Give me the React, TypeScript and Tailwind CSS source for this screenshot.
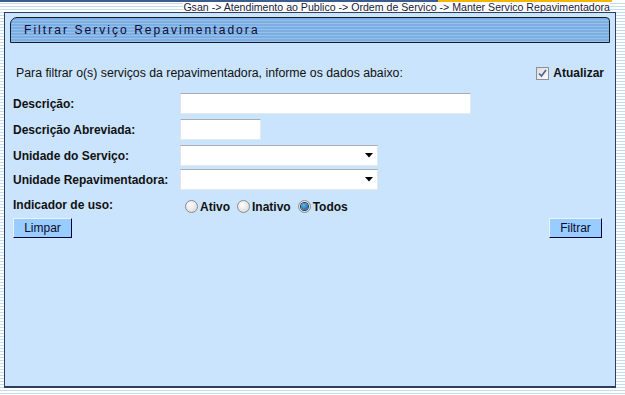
import React from "react";

const FONT = "font-['Liberation_Sans',Arial,sans-serif]";

function Checkbox() {
  return (
    <span className="flex h-[13px] w-[13px] items-center justify-center border border-[#8e8f8f] bg-[linear-gradient(135deg,#dcdcdc,#fbfbfb)]">
      <svg width="9" height="9" viewBox="0 0 9 9">
        <path d="M1 4.5 L3.5 7 L8 1" fill="none" stroke="#4a5f97" strokeWidth="1.6" />
      </svg>
    </span>
  );
}

function Radio({ checked }: { checked?: boolean }) {
  return (
    <span className="flex h-[13px] w-[13px] items-center justify-center rounded-full border border-[#8b8b8b] bg-[radial-gradient(circle_at_40%_35%,#ffffff,#d2d2d2)]">
      {checked && (
        <span className="h-[7px] w-[7px] rounded-full bg-[radial-gradient(circle_at_40%_35%,#5fb7ea,#0b4f86)] ring-1 ring-[#153a5c]" />
      )}
    </span>
  );
}

function TextBox({ w }: { w: string }) {
  return (
    <div
      className={`h-[21px] ${w} border border-t-[#abadb3] border-l-[#e2e3ea] border-r-[#e3e9ef] border-b-[#e3e9ef] bg-white`}
    />
  );
}

function Select() {
  return (
    <div className="flex h-[21px] w-[198px] items-center justify-end border border-t-[#abadb3] border-l-[#e2e3ea] border-r-[#e3e9ef] border-b-[#e3e9ef] bg-white pr-[4px]">
      <svg width="8" height="5" viewBox="0 0 8 5">
        <path d="M0 0 H8 L4 4.5 Z" fill="#000" />
      </svg>
    </div>
  );
}

function Button({ label, w }: { label: string; w: string }) {
  return (
    <button
      className={`h-[20px] ${w} border border-t-[#e8f3ff] border-l-[#e8f3ff] border-r-[#00003a] border-b-[#00003a] bg-[#99ccff] text-[12px] leading-none text-[#0b0b2e]`}
    >
      {label}
    </button>
  );
}

function Row({ label, children, className = "" }: { label: string; children: React.ReactNode; className?: string }) {
  return (
    <div className={`flex items-center ${className}`}>
      <span className="w-[167px] text-[12px] font-bold text-[#111]">{label}</span>
      {children}
    </div>
  );
}

export default function App() {
  return (
    <div
      className={`${FONT} min-h-[395px] w-[625px] bg-[repeating-linear-gradient(180deg,#c4dcef_0px,#c4dcef_1px,#ffffff_1px,#ffffff_3px)]`}
    >
      {/* top strip */}
      <div className="flex h-[2px]">
        <div className="flex-1 bg-[#3c5c8e]" />
        <div className="w-[174px] bg-[#f2b705]" />
        <div className="w-[13px] bg-white" />
      </div>
      <div className="flex h-[10px] items-center justify-end pr-[15px]">
        <span className="bg-white text-[10.6px] leading-[10px] text-[#1a1a3c]">
          Gsan -&gt; Atendimento ao Publico -&gt; Ordem de Servico -&gt; Manter Servico Repavimentadora
        </span>
      </div>

      {/* panel */}
      <div className="ml-[4px] h-[376px] w-[612px] border border-b-2 border-[#2e3e5c] bg-[#cbe4fd] px-[5px] pt-[4px]">
        <div className="flex h-[26px] items-center rounded-tl-[7px] rounded-tr-[4px] border border-[#141c2c] bg-[repeating-linear-gradient(180deg,#7daee2_0px,#7daee2_2px,#96c0ee_2px,#96c0ee_3px)] pl-[13px]">
          <span className="text-[12px] tracking-[2.05px] text-[#0c0c36]">Filtrar Serviço Repavimentadora</span>
        </div>

        <div className="pl-[3px] pr-[6px]">
          <div className="mt-[20px] flex h-[20px] items-center justify-between">
            <span className="pl-[3px] text-[12.3px] text-[#111]">
              Para filtrar o(s) serviços da repavimentadora, informe os dados abaixo:
            </span>
            <span className="flex items-center gap-[4px]">
              <Checkbox />
              <span className="text-[12px] font-bold text-[#111]">Atualizar</span>
            </span>
          </div>

          <Row label="Descrição:" className="mt-[10px]">
            <TextBox w="w-[291px]" />
          </Row>
          <Row label="Descrição Abreviada:" className="mt-[5px]">
            <TextBox w="w-[81px]" />
          </Row>
          <Row label="Unidade do Serviço:" className="mt-[5px]">
            <Select />
          </Row>
          <Row label="Unidade Repavimentadora:" className="mt-[3px]">
            <Select />
          </Row>
          <Row label="Indicador de uso:" className="mt-[5px] h-[20px]">
            <div className="flex items-center pl-[5px] pt-[3px] text-[12px] font-bold text-[#111]">
              <Radio />
              <span className="ml-[2px]">Ativo</span>
              <span className="ml-[7px]"><Radio /></span>
              <span className="ml-[2px]">Inativo</span>
              <span className="ml-[7px]"><Radio checked /></span>
              <span className="ml-[2px]">Todos</span>
            </div>
          </Row>
          <div className="mt-[3px] flex items-center justify-between pr-[2px]">
            <Button label="Limpar" w="w-[59px]" />
            <Button label="Filtrar" w="w-[53px]" />
          </div>
        </div>
      </div>
    </div>
  );
}
